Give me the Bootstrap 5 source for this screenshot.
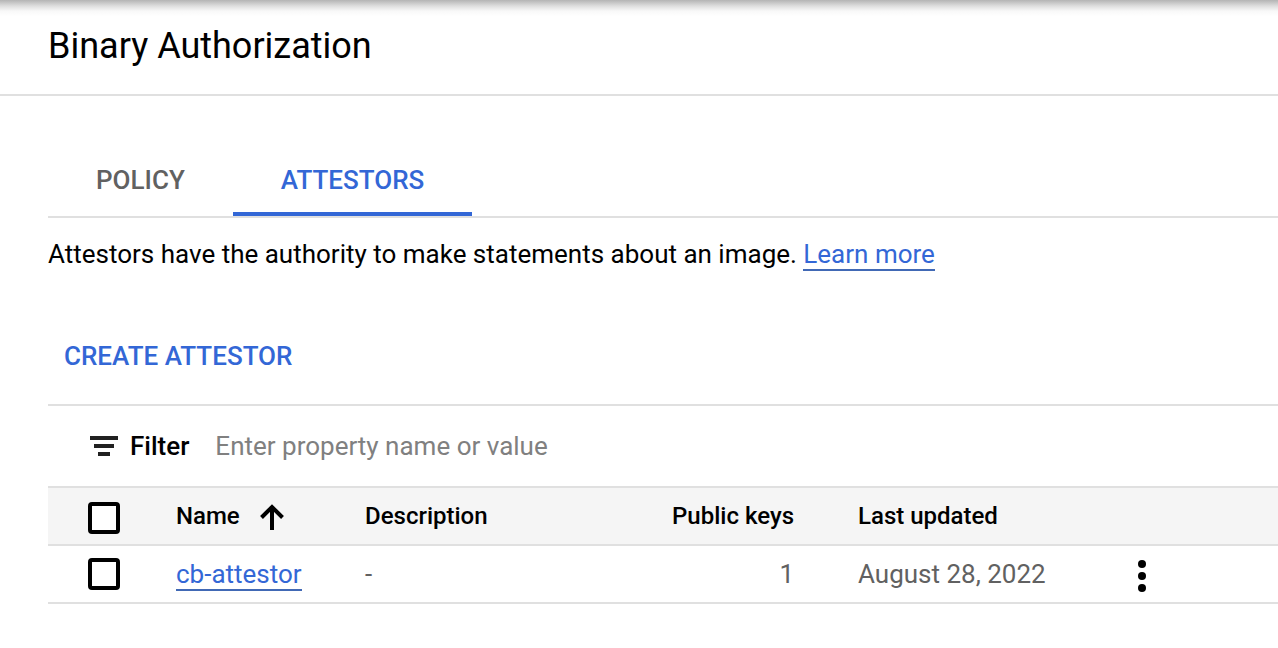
<!DOCTYPE html>
<html lang="en">
<head>
<meta charset="utf-8">
<meta name="viewport" content="width=device-width, initial-scale=1">
<title>Binary Authorization</title>
<link href="https://cdn.jsdelivr.net/npm/bootstrap@5.3.0/dist/css/bootstrap.min.css" rel="stylesheet">
<style>
  :root { --line: #e0e0e0; --accent: #3367d6; --muted: #616161; }
  body { font-family: Roboto, "Liberation Sans", sans-serif; font-size: 26px; line-height: 32px; color: #000; background: #fff; }
  .page-head { height: 96px; padding-bottom: 2px; border-bottom: 2px solid var(--line); background: linear-gradient(#b4b4b4, #dedede 6px, #f8f8f8 11px, #fff 16px); }
  .page-head h1 { font-size: 36px; line-height: 44px; font-weight: 400; }
  .content-area { padding-left: 48px; }
  .tab-row { border-bottom: 2px solid var(--line); margin-top: 48px; }
  .tab-row .nav-link { height: 72px; padding: 4px 48px 0; border-bottom: 4px solid transparent; color: var(--muted); font-weight: 500; }
  .tab-row .nav-link.active { color: var(--accent); border-color: var(--accent); }
  .text-link { color: var(--accent); text-decoration: none; border-bottom: 2px solid #4169b5; }
  .intro { padding: 20px 0 52px; }
  .btn-create { font-size: 26px; line-height: 32px; font-weight: 500; color: var(--accent); padding: 18px 16px 32px; border: 0; }
  .filter-bar { height: 82px; border-top: 2px solid var(--line); padding-left: 40px; }
  .filter-bar label { font-weight: 500; margin-left: 10px; }
  .filter-bar input { font-size: 26px; line-height: 32px; padding: 0; margin-left: 26px; }
  .filter-bar input::placeholder { color: #808080; opacity: 1; }
  .attestors { table-layout: fixed; border-top: 2px solid var(--line); }
  .attestors > * > tr > * { height: 58px; padding: 0; border-bottom: 2px solid var(--line); vertical-align: middle; white-space: nowrap; }
  .attestors thead th { background: #f5f5f5; font-size: 24px; font-weight: 500; color: #000; }
  .attestors tbody td { color: var(--muted); }
  .attestors > * > tr > .date-cell { padding-left: 64px; }
  .w-check { width: 128px; }
  .w-name { width: 189px; }
  .w-desc { width: 270px; }
  .w-keys { width: 159px; }
  .w-date { width: 322px; }
  .attestors .form-check-input { display: block; float: none; width: 32px; height: 32px; margin: 0 0 0 40px; border: 4px solid #000; border-radius: 4px; background-color: #fff; }
  .attestors thead .form-check-input { margin-top: 4px; }
  .btn-menu { width: 32px; height: 36px; padding: 4px 0 0; border: 0; margin-left: 10px; }
  svg { display: block; flex: none; }
</style>
</head>
<body>
<header class="page-head d-flex align-items-center ps-5">
  <h1 class="m-0">Binary Authorization</h1>
</header>
<main class="content-area">
  <ul class="nav tab-row">
    <li class="nav-item"><a class="nav-link d-flex align-items-center" href="#policy">POLICY</a></li>
    <li class="nav-item"><a class="nav-link active d-flex align-items-center" href="#attestors" aria-current="page">ATTESTORS</a></li>
  </ul>
  <p class="intro m-0">Attestors have the authority to make statements about an image. <a class="text-link" href="#learn">Learn more</a></p>
  <button type="button" class="btn btn-create rounded-0 d-block">CREATE ATTESTOR</button>
  <div class="filter-bar d-flex align-items-center">
    <svg width="32" height="24" viewBox="0 0 32 24" aria-hidden="true"><path fill="#212121" d="M2 2h28v4H2zM6 10h20v4H6zM10 18h12v4H10z"/></svg>
    <label for="filter">Filter</label>
    <input id="filter" class="form-control border-0 shadow-none flex-grow-1" type="text" placeholder="Enter property name or value">
  </div>
  <table class="attestors w-100">
    <colgroup><col class="w-check"><col class="w-name"><col class="w-desc"><col class="w-keys"><col class="w-date"><col></colgroup>
    <thead>
      <tr>
        <th><input class="form-check-input" type="checkbox" aria-label="Select all attestors"></th>
        <th scope="col"><span class="d-flex align-items-center">Name
          <svg class="ms-3" width="32" height="32" viewBox="0 0 32 32" aria-hidden="true"><path d="M16 30V6M5.500 17.500L16 7l10.500 10.500" fill="none" stroke="#000" stroke-width="4"/></svg></span></th>
        <th scope="col">Description</th>
        <th scope="col" class="text-end">Public keys</th>
        <th scope="col" class="date-cell">Last updated</th>
        <th></th>
      </tr>
    </thead>
    <tbody>
      <tr>
        <td><input class="form-check-input" type="checkbox" aria-label="Select cb-attestor"></td>
        <td><a class="text-link" href="#cb-attestor">cb-attestor</a></td>
        <td>-</td>
        <td class="text-end">1</td>
        <td class="date-cell">August 28, 2022</td>
        <td><button type="button" class="btn btn-menu d-flex justify-content-center" aria-label="Actions for cb-attestor">
          <svg width="8" height="32" viewBox="0 0 8 32" aria-hidden="true"><circle cx="4" cy="4" r="4"/><circle cx="4" cy="16" r="4"/><circle cx="4" cy="28" r="4"/></svg></button></td>
      </tr>
    </tbody>
  </table>
</main>
<script src="https://cdn.jsdelivr.net/npm/bootstrap@5.3.0/dist/js/bootstrap.bundle.min.js"></script>
</body>
</html>
